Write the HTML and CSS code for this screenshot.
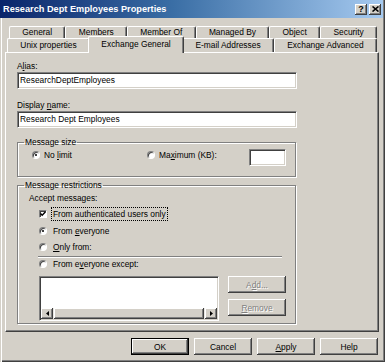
FILE: index.html
```html
<!DOCTYPE html>
<html lang="en">

<head>
    <meta charset="UTF-8">
    <meta name="viewport" content="width=device-width, initial-scale=1.0">
    <title>Research Dept Employees Properties</title>
    <link rel="stylesheet" href="styles.css">
</head>

<body>

    <div class="window">
        <div class="titlebar">
            <span class="title">Research Dept Employees Properties</span>
            <div class="title-buttons">
                <span class="title-btn">?</span>
                <span class="title-btn">
                    <svg width="7" height="6" viewBox="0 0 7 6">
                        <path d="M0.5 0.5L6.5 5.5M6.5 0.5L0.5 5.5" stroke="#000" stroke-width="1.6" />
                    </svg>
                </span>
            </div>
        </div>

        <div class="dialog">
            <div class="tabs">
                <div class="tab-row back">
                    <div class="tab">General</div>
                    <div class="tab">Members</div>
                    <div class="tab">Member Of</div>
                    <div class="tab">Managed By</div>
                    <div class="tab">Object</div>
                    <div class="tab">Security</div>
                </div>
                <div class="tab-row front">
                    <div class="tab">Unix properties</div>
                    <div class="tab selected">Exchange General</div>
                    <div class="tab">E-mail Addresses</div>
                    <div class="tab">Exchange Advanced</div>
                </div>
            </div>

            <div class="panel">
                <div class="field-label">A<u>l</u>ias:</div>
                <div class="text-input">ResearchDeptEmployees</div>
                <div class="field-label second">Display <u>n</u>ame:</div>
                <div class="text-input">Research Dept Employees</div>

                <fieldset class="group size">
                    <legend>Message size</legend>
                    <div class="size-row">
                        <div class="option first">
                            <span class="radio on"></span>
                            <span>No <u>l</u>imit</span>
                        </div>
                        <div class="option">
                            <span class="radio"></span>
                            <span>Ma<u>x</u>imum (KB):</span>
                        </div>
                        <div class="small-input"></div>
                    </div>
                </fieldset>

                <fieldset class="group restrictions">
                    <legend>Message restrictions</legend>
                    <div class="accept">Accept messages:</div>
                    <div class="choice-list">
                        <div class="option check-row">
                            <span class="check">
                                <svg width="6" height="6" viewBox="0 0 6 6">
                                    <path d="M0.5 2.5L2.2 4.3L5.5 0.8" stroke="#000" stroke-width="1.4" fill="none" />
                                </svg>
                            </span>
                            <span class="focus">From authenticated users only</span>
                        </div>
                        <div class="option everyone">
                            <span class="radio on"></span>
                            <span>From <u>e</u>veryone</span>
                        </div>
                        <div class="option only">
                            <span class="radio"></span>
                            <span><u>O</u>nly from:</span>
                        </div>
                        <div class="separator"></div>
                        <div class="option">
                            <span class="radio"></span>
                            <span>From e<u>v</u>eryone except:</span>
                        </div>
                    </div>
                    <div class="list-row">
                        <div class="listbox">
                            <div class="list-items"></div>
                            <div class="hscroll">
                                <span class="scroll-btn">
                                    <svg width="3" height="5" viewBox="0 0 3 5"><path d="M3 0V5L0 2.5Z" fill="#000" /></svg>
                                </span>
                                <span class="scroll-thumb"></span>
                                <span class="scroll-btn">
                                    <svg width="3" height="5" viewBox="0 0 3 5"><path d="M0 0V5L3 2.5Z" fill="#000" /></svg>
                                </span>
                            </div>
                        </div>
                        <div class="side-buttons">
                            <div class="btn disabled">A<u>d</u>d...</div>
                            <div class="btn disabled"><u>R</u>emove</div>
                        </div>
                    </div>
                </fieldset>
            </div>

            <div class="dialog-buttons">
                <div class="btn default">OK</div>
                <div class="btn">Cancel</div>
                <div class="btn"><u>A</u>pply</div>
                <div class="btn">Help</div>
            </div>
        </div>
    </div>

</body>

</html>
```

FILE: styles.css
```css
body {
    margin: 0;
    font-family: "Liberation Sans", Arial, sans-serif;
    font-size: 8.4px;
    color: #000;
    background-color: #d4d0c8;
}

u {
    text-decoration-thickness: 1px;
    text-underline-offset: 1px;
}

.window {
    width: 385px;
    height: 362px;
    box-sizing: border-box;
    padding: 0 2px 2px 0;
    background-color: #d4d0c8;
    box-shadow: inset 1px 0 0 #d4d0c8, inset 2px 0 0 #fff, inset -1px -1px 0 #404040, inset -2px -2px 0 #808080;
}

/* title bar */

.titlebar {
    height: 18px;
    display: flex;
    align-items: center;
    padding: 0 2px 0 3px;
    background: linear-gradient(to right, #0a246a, #3a6ea5 45%, #a6caf0);
}

.title {
    color: #fff;
    font-weight: bold;
    font-size: 9.2px;
}

.title-buttons {
    margin-left: auto;
    display: flex;
    gap: 2px;
}

.title-btn {
    width: 12px;
    height: 11px;
    box-sizing: border-box;
    display: flex;
    align-items: center;
    justify-content: center;
    background-color: #d4d0c8;
    box-shadow: inset -1px -1px 0 #404040, inset 1px 1px 0 #fff, inset -2px -2px 0 #808080;
    font-weight: bold;
    font-size: 9px;
    line-height: 9px;
}

/* tabs */

.dialog {
    padding: 8px 4px 0 5px;
}

.tab-row {
    display: flex;
}

.tab-row.back {
    height: 12px;
    margin: 0 2px 0 4px;
}

.tab-row.front {
    height: 14px;
    margin: 0 2px;
}

.tab {
    flex: 1 1 auto;
    box-sizing: border-box;
    height: 100%;
    text-align: center;
    white-space: nowrap;
    border-top: 1px solid #fff;
    border-left: 1px solid #fff;
    border-right: 1px solid #404040;
    border-radius: 2px 2px 0 0;
    box-shadow: inset -1px 0 0 #808080;
}

.back .tab {
    line-height: 11px;
}

.front .tab {
    line-height: 13px;
}

.front .tab.selected {
    height: 17px;
    margin: -2px -2px -1px;
    line-height: 14px;
    position: relative;
    z-index: 1;
    background-color: #d4d0c8;
}

/* panel */

.panel {
    height: 280px;
    box-sizing: border-box;
    border: 1px solid;
    border-color: #fff #404040 #404040 #fff;
    box-shadow: inset -1px -1px 0 #808080;
    padding: 8px 0 0 11px;
}

.field-label {
    height: 10px;
    line-height: 10px;
}

.field-label.second {
    margin-top: 11px;
}

.text-input {
    width: 280px;
    height: 17px;
    margin-top: 1px;
    box-sizing: border-box;
    padding: 0 2px;
    line-height: 15px;
    background-color: #fff;
    border: 1px solid;
    border-color: #808080 #fff #fff #808080;
    box-shadow: inset 1px 1px 0 #404040, inset -1px -1px 0 #d4d0c8;
}

.group {
    width: 279px;
    min-width: 0;
    box-sizing: border-box;
    margin: 9px 0 0;
    padding: 2px 6px 10px;
    border: 1px solid #808080;
    box-shadow: 1px 1px 0 #fff, inset 1px 1px 0 #fff;
}

.group legend {
    padding: 0 1px;
    line-height: 10px;
}

.group.restrictions {
    margin-top: 3px;
    padding: 3px 6px 2px;
}

.option {
    display: flex;
    align-items: center;
    height: 12px;
    line-height: 12px;
    gap: 4px;
}

.size-row {
    display: flex;
    align-items: flex-start;
    height: 17px;
}

.size-row .option.first {
    width: 115px;
    margin-left: 8px;
}

.small-input {
    width: 37px;
    height: 17px;
    margin: 0 3px 0 auto;
    box-sizing: border-box;
    background-color: #fff;
    border: 1px solid;
    border-color: #808080 #fff #fff #808080;
    box-shadow: inset 1px 1px 0 #404040, inset -1px -1px 0 #d4d0c8;
}

.radio {
    width: 8px;
    height: 8px;
    flex: none;
    box-sizing: border-box;
    position: relative;
    border-radius: 50%;
    background-color: #fff;
    border: 1px solid;
    border-color: #808080 #fff #fff #808080;
    box-shadow: inset 1px 1px 0 #404040;
}

.radio.on::after {
    content: "";
    position: absolute;
    left: 2px;
    top: 2px;
    width: 2px;
    height: 2px;
    border-radius: 50%;
    background-color: #000;
}

.check {
    width: 8px;
    height: 8px;
    flex: none;
    box-sizing: border-box;
    display: flex;
    align-items: center;
    justify-content: center;
    background-color: #fff;
    border: 1px solid;
    border-color: #808080 #fff #fff #808080;
    box-shadow: inset 1px 1px 0 #404040;
}

.accept {
    margin-left: 5px;
    line-height: 10px;
}

.choice-list .option {
    margin-left: 15px;
    gap: 6px;
}

.choice-list .check-row {
    margin-top: 5px;
}

.choice-list .everyone {
    margin-top: 5px;
}

.choice-list .only {
    margin-top: 4px;
}

.focus {
    outline: 1px dotted #000;
    padding: 0 1px;
    margin-left: -1px;
}

.separator {
    width: 244px;
    margin: 3px 0 0 14px;
    border-top: 1px solid #808080;
    border-bottom: 1px solid #fff;
}

.list-row {
    display: flex;
    gap: 9px;
    margin: 6px 0 0 15px;
}

.listbox {
    width: 180px;
    height: 45px;
    box-sizing: border-box;
    display: flex;
    flex-direction: column;
    background-color: #fff;
    border: 1px solid;
    border-color: #808080 #fff #fff #808080;
    box-shadow: inset 1px 1px 0 #404040, inset -1px -1px 0 #d4d0c8;
    padding: 1px 1px 1px 1px;
}

.list-items {
    flex: 1;
}

.hscroll {
    display: flex;
    height: 11px;
    background-color: #eae8e3;
}

.scroll-btn {
    width: 12px;
    display: flex;
    align-items: center;
    justify-content: center;
    background-color: #d4d0c8;
    box-shadow: inset -1px -1px 0 #404040, inset 1px 1px 0 #fff, inset -2px -2px 0 #808080;
}

.scroll-thumb {
    flex: 1;
    margin: 0 1px;
    background-color: #d4d0c8;
    box-shadow: inset -1px -1px 0 #404040, inset 1px 1px 0 #fff, inset -2px -2px 0 #808080;
}

.side-buttons {
    display: flex;
    flex-direction: column;
    gap: 6px;
}

/* buttons */

.btn {
    width: 58px;
    height: 17px;
    box-sizing: border-box;
    display: flex;
    align-items: center;
    justify-content: center;
    background-color: #d4d0c8;
    box-shadow: inset -1px -1px 0 #404040, inset 1px 1px 0 #fff, inset -2px -2px 0 #808080;
}

.btn.disabled {
    color: #808080;
    text-shadow: 1px 1px 0 #fff;
}

.btn.default {
    border: 1px solid #000;
}

.dialog-buttons {
    display: flex;
    justify-content: flex-end;
    gap: 5px;
    margin: 6px 1px 0 0;
}
```
